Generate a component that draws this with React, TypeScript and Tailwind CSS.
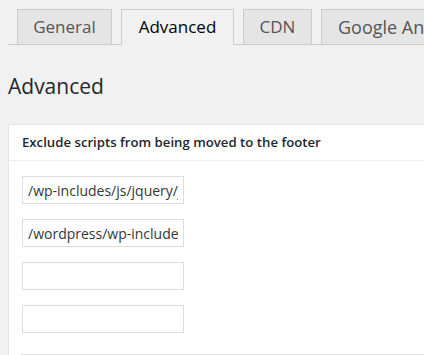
const tabs = [
  { label: "General", w: "w-[95px] justify-center text-[17px]" },
  { label: "Advanced", w: "w-[113px] justify-center text-[17px]", active: true },
  { label: "CDN", w: "w-[69px] justify-center text-[17px]" },
  { label: "Google Analytics", w: "px-[16px] text-[18px]" },
];

const scripts = [
  "/wp-includes/js/jquery/jquery.js",
  "/wordpress/wp-includes/js/jquery/jquery.js",
  "",
  "",
];

export default function App() {
  return (
    <div
      className="h-[355px] overflow-hidden bg-[#f1f1f1] pl-2 text-[#23282d]"
      style={{ fontFamily: '"Open Sans", "Noto Sans", sans-serif' }}
    >
      {/* tabs */}
      <div className="mt-[9px] flex h-[36px] gap-[9px] border-b border-[#cccccc] pl-[9px] whitespace-nowrap">
        {tabs.map((t) => (
          <div
            key={t.label}
            className={`flex h-[36px] shrink-0 items-center border border-[#cccccc] ${t.w} ${
              t.active
                ? "border-b-[#f1f1f1] bg-[#f1f1f1] text-black"
                : "bg-[#e5e5e5] text-[#555555]"
            }`}
          >
            {t.label}
          </div>
        ))}
      </div>

      <h1 className="mt-[26px] text-[21px] leading-[30px] font-normal">Advanced</h1>

      {/* card */}
      <div className="mt-[23px] w-[480px] border border-[#e5e5e5] bg-white">
        <div className="flex h-[36px] items-center border-b border-[#eeeeee] px-[13px] text-[13.2px] font-semibold">
          Exclude scripts from being moved to the footer
        </div>
        <div className="flex flex-col gap-[15px] px-[13px] pt-[15px]">
          {scripts.map((s, i) => (
            <input
              key={i}
              readOnly
              value={s}
              className="h-[28px] w-[162px] border border-[#dddddd] bg-white px-[5px] text-[14px] text-[#32373c] outline-none"
            />
          ))}
        </div>
        <div className="mt-[21px] ml-[12px] h-[2px] bg-[#e1e1e1]" />
      </div>
    </div>
  );
}
